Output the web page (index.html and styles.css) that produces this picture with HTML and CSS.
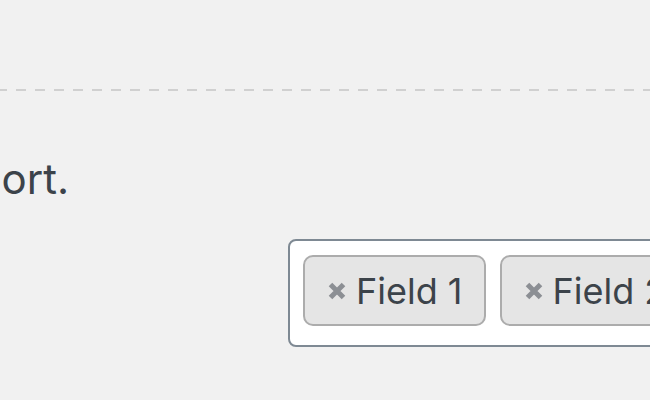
FILE: index.html
```html
<!DOCTYPE html>
<html lang="en">
<head>
    <meta charset="UTF-8">
    <meta name="viewport" content="width=device-width, initial-scale=1.0">
    <title>Export fields</title>
    <link rel="stylesheet" href="styles.css">
</head>
<body>

<div class="page">
    <div class="divider"></div>

    <!-- description runs in from the left, only its end is visible -->
    <div class="description">
        <p>Choose the fields to include in the export.</p>
    </div>

    <div class="field-row">
        <div class="field-label"></div>
        <div class="chip-box">
            <span class="chip">
                <svg class="chip-remove" width="18" height="18" viewBox="0 0 18 18">
                    <path d="M2.5 2.5 L15.5 15.5 M15.5 2.5 L2.5 15.5" />
                </svg>
                Field 1
            </span>
            <span class="chip">
                <svg class="chip-remove" width="18" height="18" viewBox="0 0 18 18">
                    <path d="M2.5 2.5 L15.5 15.5 M15.5 2.5 L2.5 15.5" />
                </svg>
                Field 2
            </span>
            <span class="chip">
                <svg class="chip-remove" width="18" height="18" viewBox="0 0 18 18">
                    <path d="M2.5 2.5 L15.5 15.5 M15.5 2.5 L2.5 15.5" />
                </svg>
                Field 3
            </span>
        </div>
    </div>
</div>

</body>
</html>
```

FILE: styles.css
```css
body {
    margin: 0;
    background-color: #f1f1f1;
    font-family: Inter, "Liberation Sans", Arial, sans-serif;
    color: #3c434a;
    overflow: hidden;
}

.page {
    padding-top: 89px;
}

.divider {
    height: 2px;
    background-image: repeating-linear-gradient(to right, #d0d0d0 0, #d0d0d0 10px, transparent 10px, transparent 19px);
    background-position: -3px 0;
}

.description {
    display: flex;
    justify-content: flex-end;
    width: 69px;
    margin-top: 65px;
}

.description p {
    margin: 0;
    font-size: 42px;
    line-height: 46px;
    white-space: nowrap;
}

.field-row {
    display: flex;
    margin-top: 37px;
}

.field-label {
    width: 288px;
    flex-shrink: 0;
}

.chip-box {
    display: flex;
    gap: 14px;
    flex-shrink: 0;
    width: 700px;
    padding: 14px 0 19px 13px;
    background-color: #fff;
    border: 2px solid #7e8993;
    border-radius: 8px;
}

.chip {
    display: inline-flex;
    align-items: center;
    gap: 10px;
    height: 67px;
    padding: 0 21px 0 23px;
    background-color: #e5e5e5;
    border: 2px solid #acacac;
    border-radius: 10px;
    font-size: 36px;
    white-space: nowrap;
}

.chip-remove path {
    fill: none;
    stroke: #8c8f94;
    stroke-width: 5;
}
```
